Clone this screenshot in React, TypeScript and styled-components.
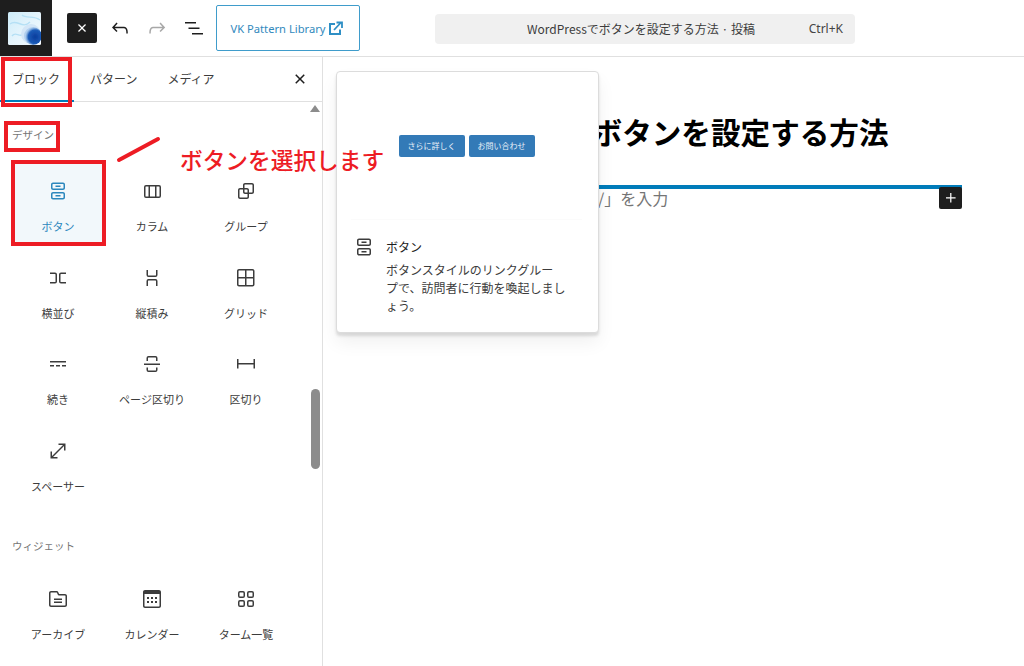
import React from "react";
import styled, { createGlobalStyle } from "styled-components";

const Global = createGlobalStyle`
  html, body { margin: 0; padding: 0; background: #fff; }
  body { font-family: "Noto Sans CJK JP", "Noto Sans", sans-serif; color: #1e1e1e; }
  * { box-sizing: border-box; }
`;

const Page = styled.div`
  position: relative;
  width: 1024px;
  height: 666px;
  overflow: hidden;
  display: flex;
  flex-direction: column;
`;

const Header = styled.header`
  height: 57px;
  flex: none;
  display: flex;
  align-items: center;
  border-bottom: 1px solid #e0e0e0;
`;

const LogoCell = styled.div`
  width: 52px;
  height: 56px;
  background: #1e1e1e;
  display: flex;
  align-items: center;
  justify-content: flex-start;
  padding-left: 8px;
`;

const Tools = styled.div`
  display: flex;
  align-items: center;
  margin-left: 15px;
`;

const CloseTool = styled.button`
  width: 30px;
  height: 30px;
  padding: 0;
  border: 0;
  border-radius: 2px;
  background: #1e1e1e;
  color: #fff;
  display: flex;
  align-items: center;
  justify-content: center;
  margin-right: 5px;
`;

const IconTool = styled.button<{ $off?: boolean }>`
  width: 36px;
  height: 36px;
  padding: 0;
  border: 0;
  background: none;
  color: ${(p) => (p.$off ? "#a8a8a8" : "#1e1e1e")};
  display: flex;
  align-items: center;
  justify-content: center;
  margin-right: 1px;
`;

const PatternButton = styled.button`
  width: 144px;
  height: 46px;
  margin-left: 3px;
  padding: 0 3px 0 0;
  border: 1px solid #3f9ccb;
  border-radius: 2px;
  background: #fff;
  color: #3189bd;
  font: 400 11.2px "Noto Sans", "Noto Sans CJK JP", sans-serif;
  display: flex;
  align-items: center;
  justify-content: center;
  gap: 2px;
`;

const CommandBar = styled.div`
  width: 420px;
  height: 30px;
  margin-left: 75px;
  margin-top: 1px;
  border-radius: 4px;
  background: #f0f0f0;
  display: flex;
  align-items: center;
  font-size: 12px;
  color: #3c3c3c;
  position: relative;
`;

const CommandTitle = styled.span`
  margin-left: 92px;
  white-space: nowrap;
`;

const CommandKey = styled.span`
  margin-left: auto;
  margin-right: 12px;
  font: 400 12px "Noto Sans", sans-serif;
  color: #444;
`;

const Body = styled.div`
  flex: 1;
  display: flex;
  min-height: 0;
`;

const Sidebar = styled.aside`
  position: relative;
  width: 323px;
  flex: none;
  border-right: 1px solid #e0e0e0;
  display: flex;
  flex-direction: column;
`;

const Tabs = styled.div`
  height: 45px;
  flex: none;
  display: flex;
  gap: 4px;
  border-bottom: 1px solid #e0e0e0;
  position: relative;
`;

const Tab = styled.div<{ $active?: boolean }>`
  padding: 0 14px 0 12px;
  font-size: 12px;
  line-height: 44px;
  color: #3c3c3c;
  white-space: nowrap;
  height: 45px;
  border-bottom: 2px solid ${(p) => (p.$active ? "#007cba" : "transparent")};
`;

const TabClose = styled.div`
  position: absolute;
  right: 10px;
  top: 10px;
  color: #1e1e1e;
  display: flex;
`;

const Inserter = styled.div`
  position: relative;
  flex: 1;
  padding: 25px 0 0 14px;
  overflow: hidden;
`;

const SectionLabel = styled.div<{ $gap: number; $top?: number }>`
  font-size: 10.5px;
  line-height: 16px;
  color: #757575;
  margin-left: -2px;
  margin-top: ${(p) => p.$top ?? 0}px;
  margin-bottom: ${(p) => p.$gap}px;
`;

const BlockGrid = styled.div`
  display: grid;
  grid-template-columns: repeat(3, 88px);
  grid-auto-rows: 79px;
  column-gap: 6px;
  row-gap: 7.5px;
`;

const Tile = styled.div<{ $selected?: boolean }>`
  display: flex;
  flex-direction: column;
  align-items: center;
  padding-top: 16px;
  background: ${(p) => (p.$selected ? "#f2f8fb" : "transparent")};
  color: ${(p) => (p.$selected ? "#2b87bd" : "#3c3c3c")};
`;

const TileLabel = styled.span`
  margin-top: 15px;
  font-size: 11px;
  line-height: 16px;
  white-space: nowrap;
`;

const ScrollArrow = styled.div`
  position: absolute;
  top: 3px;
  right: 2px;
  width: 0;
  height: 0;
  border-left: 5px solid transparent;
  border-right: 5px solid transparent;
  border-bottom: 7px solid #8c8c8c;
`;

const ScrollThumb = styled.div`
  position: absolute;
  top: 287px;
  right: 2px;
  width: 9px;
  height: 80px;
  border-radius: 5px;
  background: #8c8c8c;
`;

const Canvas = styled.main`
  flex: 1;
  padding: 53px 62px 0 61px;
`;

const PostTitle = styled.h1`
  margin: 0;
  padding-left: 23px;
  font-size: 29.6px;
  line-height: 44px;
  font-weight: 700;
  color: #000;
  white-space: nowrap;
`;

const ParagraphBlock = styled.div`
  position: relative;
  margin-top: 31px;
  height: 24px;
  border-top: 4px solid #007cba;
  padding-left: 22px;
  font-size: 16px;
  line-height: 19px;
  color: #757575;
  white-space: nowrap;
`;

const AddBlock = styled.div`
  position: absolute;
  top: -2px;
  right: 0;
  width: 23px;
  height: 22px;
  border-radius: 2px;
  background: #1e1e1e;
  color: #fff;
  display: flex;
  align-items: center;
  justify-content: center;
`;

const Popover = styled.div`
  position: absolute;
  left: 336px;
  top: 71px;
  width: 263px;
  height: 262px;
  background: #fff;
  border: 1px solid #dcdcdc;
  border-radius: 4px;
  box-shadow: 0 3px 3px rgba(0, 0, 0, 0.12), 0 10px 18px rgba(0, 0, 0, 0.06);
  display: flex;
  flex-direction: column;
`;

const Preview = styled.div`
  height: 148px;
  flex: none;
  display: flex;
  justify-content: center;
  gap: 4px;
  padding-top: 63px;
  margin: 0 16px 0 14px;
  border-bottom: 1px solid #fbfbfb;
`;

const PreviewButton = styled.div`
  width: 66px;
  height: 22px;
  border-radius: 2px;
  background: #337ab7;
  color: #e8f0f7;
  font-size: 8px;
  line-height: 21px;
  text-align: center;
  white-space: nowrap;
`;

const Card = styled.div`
  display: flex;
  gap: 10px;
  padding: 15px 17px 0 15px;
`;

const CardIcon = styled.div`
  flex: none;
  height: 24px;
  color: #3c3c3c;
`;

const CardText = styled.div`
  width: 196px;
`;

const CardTitle = styled.div`
  font-size: 12px;
  font-weight: 400;
  line-height: 24px;
  color: #1e1e1e;
  margin-bottom: 2px;
`;

const CardDesc = styled.div`
  font-size: 12px;
  line-height: 18px;
  color: #3c3c3c;
`;

const Mark = styled.div<{ $l: number; $t: number; $w: number; $h: number }>`
  position: absolute;
  left: ${(p) => p.$l}px;
  top: ${(p) => p.$t}px;
  width: ${(p) => p.$w}px;
  height: ${(p) => p.$h}px;
  border: 4px solid #ed1c24;
  pointer-events: none;
`;

const Callout = styled.div`
  position: absolute;
  left: 180px;
  top: 143px;
  font-size: 22.7px;
  line-height: 34px;
  font-weight: 500;
  color: #ed1c24;
  white-space: nowrap;
`;

const Stroke = styled.svg`
  position: absolute;
  left: 114px;
  top: 134px;
`;

const Wp = ({ d, size = 24 }: { d: string; size?: number }) => (
  <svg width={size} height={size} viewBox="0 0 24 24" fill="currentColor">
    <path d={d} fillRule="evenodd" clipRule="evenodd" />
  </svg>
);

const I = {
  close: "M12 13.06l3.712 3.713 1.061-1.06L13.061 12l3.712-3.712-1.06-1.06L12 10.938 8.288 7.227l-1.061 1.06L10.939 12l-3.712 3.712 1.06 1.061L12 13.061z",
  undo: "M18.3 11.7c-.6-.6-1.4-.9-2.3-.9H6.7l2.9-3.3-1.1-1-4.5 5L8.5 16l1-1-2.7-2.7H16c.5 0 .9.2 1.3.5 1 1 1 3.4 1 4.5v.3h1.5v-.2c0-1.5 0-4.3-1.5-5.7z",
  redo: "M15.6 6.5l-1.1 1 2.9 3.3H8c-.9 0-1.7.3-2.3.9-1.4 1.5-1.4 4.2-1.4 5.6v.2h1.5v-.3c0-1.1 0-3.5 1-4.5.3-.3.7-.5 1.3-.5h9.2L14.5 15l1.1 1.1 4.6-4.6-4.6-5z",
  list: "M3 6h11v1.5H3V6Zm3.5 5.5h11V13h-11v-1.5ZM21 17H10v1.5h11V17Z",
  plus: "M11 12.5V17.5H12.5V12.5H17.5V11H12.5V6H11V11H6V12.5H11Z",
  buttons: "M14.5 17.5H9.5V16H14.5V17.5Z M14.5 8H9.5V6.5H14.5V8Z M7 3.5H17C18.1046 3.5 19 4.39543 19 5.5V9C19 10.1046 18.1046 11 17 11H7C5.89543 11 5 10.1046 5 9V5.5C5 4.39543 5.89543 3.5 7 3.5ZM17 5H7C6.72386 5 6.5 5.22386 6.5 5.5V9C6.5 9.27614 6.72386 9.5 7 9.5H17C17.2761 9.5 17.5 9.27614 17.5 9V5.5C17.5 5.22386 17.2761 5 17 5Z M7 13H17C18.1046 13 19 13.8954 19 15V18.5C19 19.6046 18.1046 20.5 17 20.5H7C5.89543 20.5 5 19.6046 5 18.5V15C5 13.8954 5.89543 13 7 13ZM17 14.5H7C6.72386 14.5 6.5 14.7239 6.5 15V18.5C6.5 18.7761 6.72386 19 7 19H17C17.2761 19 17.5 18.7761 17.5 18.5V15C17.5 14.7239 17.2761 14.5 17 14.5Z",
  columns: "M15 7.5h-5v10h5v-10Zm1.5 0v10H19a.5.5 0 0 0 .5-.5V8a.5.5 0 0 0-.5-.5h-2.5ZM6 7.5h2.5v10H6a.5.5 0 0 1-.5-.5V8a.5.5 0 0 1 .5-.5ZM6 6h13a2 2 0 0 1 2 2v9a2 2 0 0 1-2 2H6a2 2 0 0 1-2-2V8a2 2 0 0 1 2-2Z",
  group: "M18 4h-7c-1.1 0-2 .9-2 2v3H6c-1.1 0-2 .9-2 2v7c0 1.1.9 2 2 2h7c1.1 0 2-.9 2-2v-3h3c1.1 0 2-.9 2-2V6c0-1.1-.9-2-2-2zm-4.5 14c0 .3-.2.5-.5.5H6c-.3 0-.5-.2-.5-.5v-7c0-.3.2-.5.5-.5h3V13c0 1.1.9 2 2 2h2.5v3zm0-4.5H11c-.3 0-.5-.2-.5-.5v-2.5H13c.3 0 .5.2.5.5v2.5zm5-.5c0 .3-.2.5-.5.5h-3V11c0-1.1-.9-2-2-2h-2.5V6c0-.3.2-.5.5-.5h7c.3 0 .5.2.5.5v7z",
  row: "M4 6.5h5a2 2 0 0 1 2 2v7a2 2 0 0 1-2 2H4V16h5a.5.5 0 0 0 .5-.5v-7A.5.5 0 0 0 9 8H4V6.5Zm16 0h-5a2 2 0 0 0-2 2v7a2 2 0 0 0 2 2h5V16h-5a.5.5 0 0 1-.5-.5v-7A.5.5 0 0 1 15 8h5V6.5Z",
  stack: "M17.5 4v5a2 2 0 0 1-2 2h-7a2 2 0 0 1-2-2V4H8v5a.5.5 0 0 0 .5.5h7A.5.5 0 0 0 16 9V4h1.5Zm0 16v-5a2 2 0 0 0-2-2h-7a2 2 0 0 0-2 2v5H8v-5a.5.5 0 0 1 .5-.5h7a.5.5 0 0 1 .5.5v5h1.5Z",
  grid: "M3 5c0-1.10457.89543-2 2-2h13.5c1.1046 0 2 .89543 2 2v13.5c0 1.1046-.8954 2-2 2H5c-1.10457 0-2-.8954-2-2V5Zm2-.5h6V11H4.5V5c0-.27614.22386-.5.5-.5Zm-.5 8v6c0 .2761.22386.5.5.5h6v-6.5H4.5Zm8 0V19h6c.2761 0 .5-.2239.5-.5v-6h-6.5Zm0-8V11H19V5c0-.27614-.2239-.5-.5-.5h-6Z",
  more: "M4 9v1.5h16V9H4zm12 5.5h4V13h-4v1.5zm-6 0h4V13h-4v1.5zm-6 0h4V13H4v1.5z",
  pageBreak: "M17.5 9V6a2 2 0 0 0-2-2h-7a2 2 0 0 0-2 2v3H8V6a.5.5 0 0 1 .5-.5h7a.5.5 0 0 1 .5.5v3h1.5Zm0 6.5V18a2 2 0 0 1-2 2h-7a2 2 0 0 1-2-2v-2.5H8V18a.5.5 0 0 0 .5.5h7a.5.5 0 0 0 .5-.5v-2.5h1.5ZM4 11.5h16V13H4z",
  separator: "M4.5 12.5v4H3V7h1.5v3.987h15V7H21v9.5h-1.5v-4h-15Z",
  spacer: "M7 18h4.5v1.5h-7v-7H6V17L17 6h-4.5V4.5h7v7H18V7L7 18Z",
  archive: "M5 5.5h5.5c.2 0 .4.1.45.3L11.8 7.7c.2.5.6.8 1.1.8H19c.3 0 .5.2.5.5v9c0 .3-.2.5-.5.5H5c-.3 0-.5-.2-.5-.5V6c0-.3.2-.5.5-.5ZM5 4h5.5c.8 0 1.5.5 1.8 1.2L13.1 7H19c1.1 0 2 .9 2 2v9c0 1.1-.9 2-2 2H5c-1.1 0-2-.9-2-2V6c0-1.1.9-2 2-2ZM8 13v-1.5h8V13H8Zm0 3v-1.5h8V16H8Z",
  calendar: "M19 3H5c-1.1 0-2 .9-2 2v14c0 1.1.9 2 2 2h14c1.1 0 2-.9 2-2V5c0-1.1-.9-2-2-2zm.5 16c0 .3-.2.5-.5.5H5c-.3 0-.5-.2-.5-.5V7h15v12zM9 10H7v2h2v-2zm0 4H7v2h2v-2zm4-4h-2v2h2v-2zm4 0h-2v2h2v-2zm-4 4h-2v2h2v-2zm4 0h-2v2h2v-2z",
  terms: "M6 5.5h3a.5.5 0 01.5.5v3a.5.5 0 01-.5.5H6a.5.5 0 01-.5-.5V6a.5.5 0 01.5-.5zM4 6a2 2 0 012-2h3a2 2 0 012 2v3a2 2 0 01-2 2H6a2 2 0 01-2-2V6zm11-.5h3a.5.5 0 01.5.5v3a.5.5 0 01-.5.5h-3a.5.5 0 01-.5-.5V6a.5.5 0 01.5-.5zM13 6a2 2 0 012-2h3a2 2 0 012 2v3a2 2 0 01-2 2h-3a2 2 0 01-2-2V6zm5 8.5h-3a.5.5 0 00-.5.5v3a.5.5 0 00.5.5h3a.5.5 0 00.5-.5v-3a.5.5 0 00-.5-.5zM15 13a2 2 0 00-2 2v3a2 2 0 002 2h3a2 2 0 002-2v-3a2 2 0 00-2-2h-3zm-9 1.5h3a.5.5 0 01.5.5v3a.5.5 0 01-.5.5H6a.5.5 0 01-.5-.5v-3a.5.5 0 01.5-.5zM4 15a2 2 0 012-2h3a2 2 0 012 2v3a2 2 0 01-2 2H6a2 2 0 01-2-2v-3z",
};

const design: [string, string][] = [
  [I.buttons, "ボタン"],
  [I.columns, "カラム"],
  [I.group, "グループ"],
  [I.row, "横並び"],
  [I.stack, "縦積み"],
  [I.grid, "グリッド"],
  [I.more, "続き"],
  [I.pageBreak, "ページ区切り"],
  [I.separator, "区切り"],
  [I.spacer, "スペーサー"],
];

const widgets: [string, string][] = [
  [I.archive, "アーカイブ"],
  [I.calendar, "カレンダー"],
  [I.terms, "ターム一覧"],
];

const Logo = () => (
  <svg width="33" height="33" viewBox="0 0 33 33">
    <defs>
      <radialGradient id="blob" cx="0.62" cy="0.55" r="0.55">
        <stop offset="0" stopColor="#0a3c9c" />
        <stop offset="0.7" stopColor="#1c5cb8" />
        <stop offset="1" stopColor="#5f98da" stopOpacity="0.3" />
      </radialGradient>
      <linearGradient id="sky" x1="0" y1="0" x2="1" y2="1">
        <stop offset="0" stopColor="#cdecf9" />
        <stop offset="0.5" stopColor="#e4f4fc" />
        <stop offset="1" stopColor="#f6fafe" />
      </linearGradient>
      <filter id="soft">
        <feGaussianBlur stdDeviation="0.6" />
      </filter>
    </defs>
    <rect width="33" height="33" rx="1.5" fill="url(#sky)" />
    <g filter="url(#soft)">
      <path d="M2 12 C9 6 14 18 22 10 M4 24 C8 18 12 28 17 20 M14 3 C18 7 26 3 32 8" stroke="#b5e0f5" strokeWidth="1.4" fill="none" />
      <circle cx="23" cy="22" r="10" fill="#d3e6f7" />
      <circle cx="25" cy="24" r="9" fill="url(#blob)" />
    </g>
  </svg>
);

const ExternalIcon = () => (
  <svg width="15" height="15" viewBox="0 0 15 15" fill="none" stroke="#2e8fc5" strokeWidth="2">
    <path d="M7 3H2v10h10V8.5" />
    <path d="M6 9l7-7.5M8.5 1.5H14V7" strokeWidth="1.8" />
  </svg>
);

export default function App() {
  return (
    <Page>
      <Global />
      <Header>
        <LogoCell>
          <Logo />
        </LogoCell>
        <Tools>
          <CloseTool>
            <Wp d={I.close} size={20} />
          </CloseTool>
          <IconTool>
            <Wp d={I.undo} />
          </IconTool>
          <IconTool $off>
            <Wp d={I.redo} />
          </IconTool>
          <IconTool>
            <Wp d={I.list} />
          </IconTool>
          <PatternButton>
            VK Pattern Library
            <ExternalIcon />
          </PatternButton>
        </Tools>
        <CommandBar>
          <CommandTitle>WordPressでボタンを設定する方法 · 投稿</CommandTitle>
          <CommandKey>Ctrl+K</CommandKey>
        </CommandBar>
      </Header>
      <Body>
        <Sidebar>
          <Tabs>
            <Tab $active>ブロック</Tab>
            <Tab>パターン</Tab>
            <Tab>メディア</Tab>
            <TabClose>
              <Wp d={I.close} />
            </TabClose>
          </Tabs>
          <Inserter>
            <ScrollArrow />
            <ScrollThumb />
            <SectionLabel $gap={20}>デザイン</SectionLabel>
            <BlockGrid>
              {design.map(([d, label], i) => (
                <Tile key={label} $selected={i === 0}>
                  <Wp d={d} />
                  <TileLabel>{label}</TileLabel>
                </Tile>
              ))}
            </BlockGrid>
            <SectionLabel $top={36} $gap={17}>
              ウィジェット
            </SectionLabel>
            <BlockGrid>
              {widgets.map(([d, label]) => (
                <Tile key={label}>
                  <Wp d={d} />
                  <TileLabel>{label}</TileLabel>
                </Tile>
              ))}
            </BlockGrid>
          </Inserter>
        </Sidebar>
        <Canvas>
          <PostTitle>WordPressでボタンを設定する方法</PostTitle>
          <ParagraphBlock>
            ブロックを選択するには「/」を入力
            <AddBlock>
              <Wp d={I.plus} size={20} />
            </AddBlock>
          </ParagraphBlock>
        </Canvas>
      </Body>

      <Popover>
        <Preview>
          <PreviewButton>さらに詳しく</PreviewButton>
          <PreviewButton>お問い合わせ</PreviewButton>
        </Preview>
        <Card>
          <CardIcon>
            <Wp d={I.buttons} />
          </CardIcon>
          <CardText>
            <CardTitle>ボタン</CardTitle>
            <CardDesc>
              ボタンスタイルのリンクグルー
              <br />
              プで、訪問者に行動を喚起しまし
              <br />
              ょう。
            </CardDesc>
          </CardText>
        </Card>
      </Popover>

      <Mark $l={1} $t={57} $w={71} $h={50} />
      <Mark $l={4} $t={121} $w={56} $h={31} />
      <Mark $l={11} $t={160} $w={95} $h={86} />
      <Stroke width="50" height="32" viewBox="0 0 50 32">
        <path d="M5 26 L44 5" stroke="#ed1c24" strokeWidth="4" strokeLinecap="round" />
      </Stroke>
      <Callout>ボタンを選択します</Callout>
    </Page>
  );
}
